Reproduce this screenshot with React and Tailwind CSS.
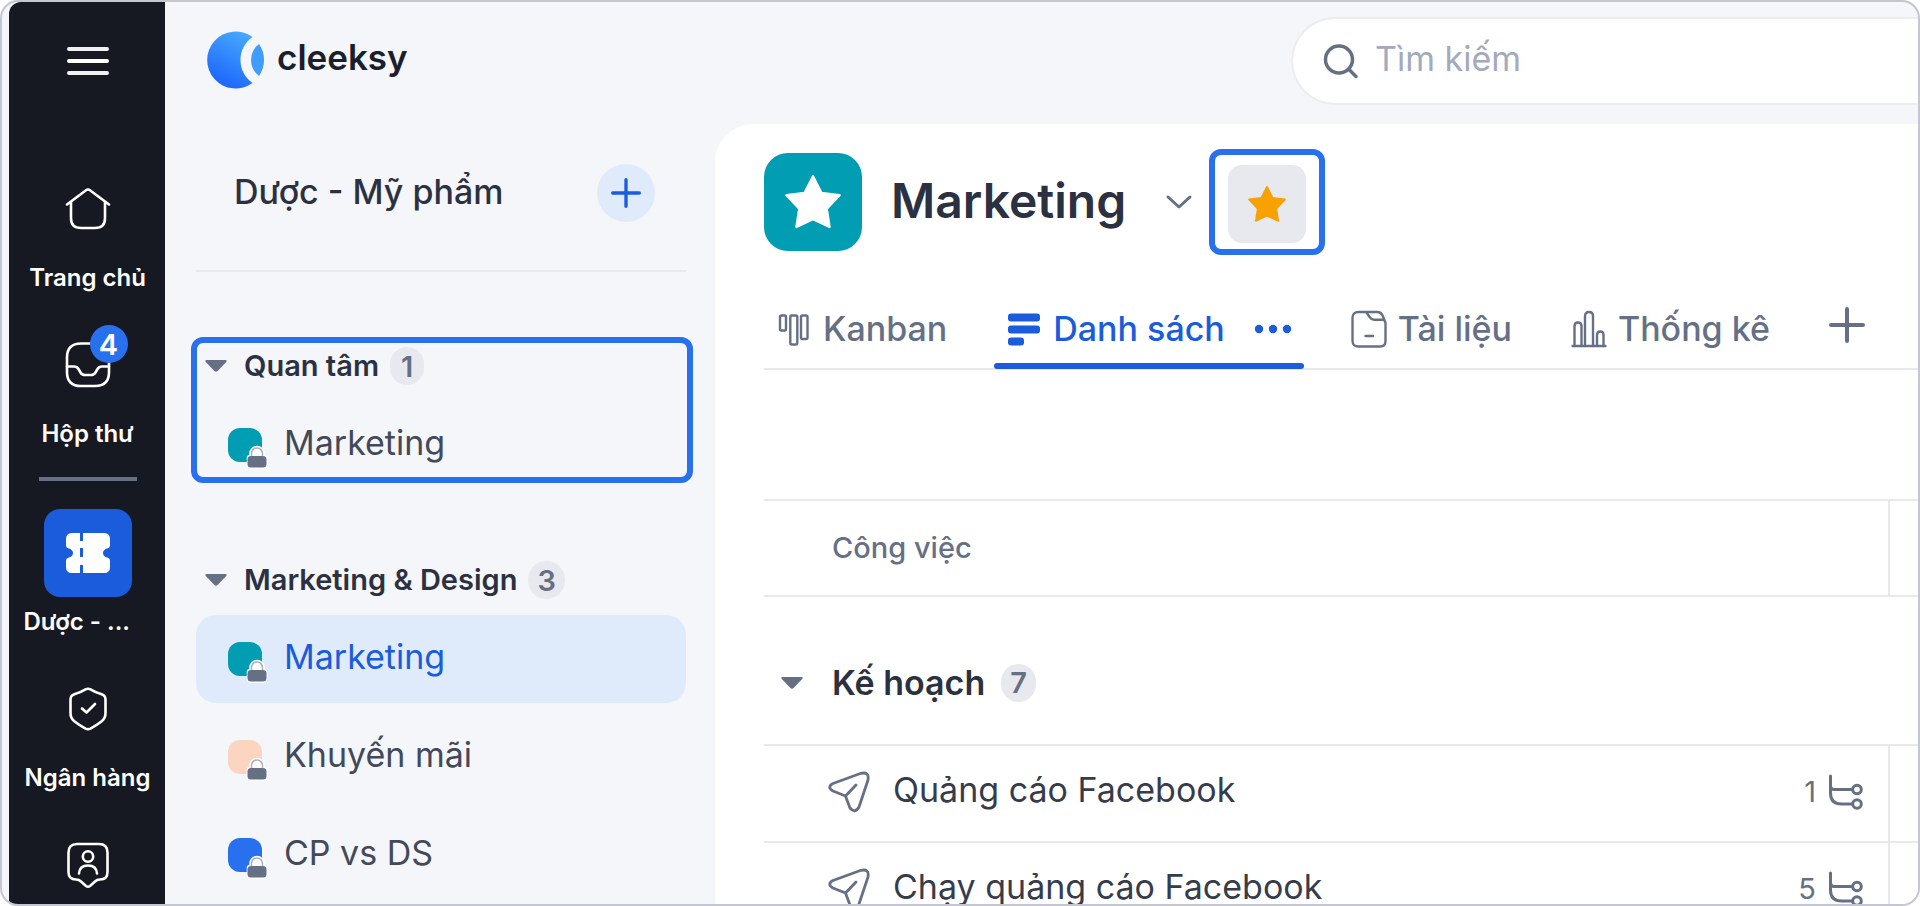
import { useState } from "react";

const NAV_TOP = [
  { id: "home", label: "Trang chủ", icon: HomeIcon },
  { id: "inbox", label: "Hộp thư", icon: InboxIcon, badge: 4 },
];

const NAV_SPACES = [
  { id: "pharma", label: "Dược - ...", icon: TicketIcon, clipped: true },
  { id: "bank", label: "Ngân hàng", icon: ShieldIcon },
  { id: "contacts", icon: UserCardIcon },
];

const TEAM_BOARDS = [
  { id: "marketing", name: "Marketing", color: "bg-[#009db3]" },
  { id: "promo", name: "Khuyến mãi", color: "bg-[#fbd5c0]" },
  { id: "cpds", name: "CP vs DS", color: "bg-[#2970ef]" },
];

const TASKS = [
  { id: 1, title: "Quảng cáo Facebook", subtasks: 1 },
  { id: 2, title: "Chạy quảng cáo Facebook", subtasks: 5 },
];

function HomeIcon() {
  return (
    <svg width="48" height="48" viewBox="0 0 48 48" fill="none" stroke="currentColor" strokeWidth="2.6" strokeLinecap="round" strokeLinejoin="round">
      <path d="M3 19.5 L22 5.2 Q24 3.8 26 5.2 L45 19.5" />
      <path d="M7 17 V33 Q7 43 17 43 H31 Q41 43 41 33 V17" />
    </svg>
  );
}

function InboxIcon() {
  return (
    <svg width="48" height="48" viewBox="0 0 48 48" fill="none" stroke="currentColor" strokeWidth="2.6" strokeLinecap="round" strokeLinejoin="round">
      <path d="M17 2.5 H31 Q45 2.5 45 16.5 V31 Q45 45 31 45 H17 Q3 45 3 31 V16.5 Q3 2.5 17 2.5 Z" />
      <path d="M3 25.5 H10 Q13 25.5 14.5 28 L16.5 31.5 Q18 34 21 34 H27 Q30 34 31.5 31.5 L33.5 28 Q35 25.5 38 25.5 H45" />
    </svg>
  );
}

function TicketIcon() {
  return (
    <svg width="44" height="40" viewBox="0 0 44 40" fill="currentColor">
      <path
        fillRule="evenodd"
        d="M6 0 H14 V8 H17 V0 H38 Q44 0 44 6 V12 Q44 15 41 15.5 Q37 17 37 20 Q37 23 41 24.5 Q44 25 44 28 V34 Q44 40 38 40 H17 V32 H14 V40 H6 Q0 40 0 34 V28 Q0 25 3 24.5 Q7 23 7 20 Q7 17 3 15.5 Q0 15 0 12 V6 Q0 0 6 0 Z M14 15 V24 H17 V15 Z"
      />
    </svg>
  );
}

function ShieldIcon() {
  return (
    <svg width="40" height="44" viewBox="0 0 40 44" fill="none" stroke="currentColor" strokeWidth="2.6" strokeLinecap="round" strokeLinejoin="round">
      <path d="M17.5 2.4 Q20 1.2 22.5 2.4 Q28 5.8 33 7 Q37.5 8.4 37.5 12.5 V26 Q37.5 31 34 34 Q29 38 22.5 41.6 Q20 42.8 17.5 41.6 Q11 38 6 34 Q2.5 31 2.5 26 V12.5 Q2.5 8.4 7 7 Q12 5.8 17.5 2.4 Z" />
      <path d="M14 21.5 L18.5 25.5 L27 17" />
    </svg>
  );
}

function UserCardIcon() {
  return (
    <svg width="44" height="48" viewBox="0 0 44 48" fill="none" stroke="currentColor" strokeWidth="2.6" strokeLinecap="round" strokeLinejoin="round">
      <path d="M11 3 H33 Q41.5 3 41.5 11.5 V31 Q41.5 38.5 34 38.5 Q31 38.5 29 40.5 L24 45 Q22 46.5 20 45 L15 40.5 Q13 38.5 10 38.5 Q2.5 38.5 2.5 31 V11.5 Q2.5 3 11 3 Z" />
      <circle cx="22" cy="15.5" r="5.2" />
      <path d="M13 32.5 Q13.5 24.5 22 24.5 Q30.5 24.5 31 32.5" />
    </svg>
  );
}

function LogoMark() {
  return (
    <svg width="58" height="58" viewBox="0 0 58 58">
      <defs>
        <linearGradient id="logo-fill" x1="14" y1="56" x2="42" y2="4" gradientUnits="userSpaceOnUse">
          <stop offset="0" stopColor="#1c64fb" />
          <stop offset="1" stopColor="#46a9fe" />
        </linearGradient>
      </defs>
      <path fill="url(#logo-fill)" d="M45.5 6 A28.5 28.5 0 1 0 45.5 52 A28 28 0 0 1 45.5 6 Z" />
      <path fill="#409dfd" d="M52 13 A28 28 0 0 1 52 45 A20 20 0 0 1 52 13 Z" />
    </svg>
  );
}

function StarIcon({ size }) {
  return (
    <svg width={size} height={size} viewBox="0 0 24 24" fill="currentColor" stroke="currentColor" strokeWidth="1" strokeLinejoin="round">
      <path d="M12 1 L15.6 8.1 L23.4 9.1 L17.9 14.9 L19.1 22.7 L12 19.4 L4.9 22.7 L6.1 14.9 L0.6 9.1 L8.4 8.1 Z" />
    </svg>
  );
}

function PlusIcon({ size, stroke }) {
  return (
    <svg width={size} height={size} viewBox="0 0 36 36" fill="none" stroke="currentColor" strokeWidth={stroke} strokeLinecap="round">
      <path d="M18 2 V34 M2 18 H34" />
    </svg>
  );
}

function Caret() {
  return (
    <svg className="shrink-0 text-[#667085]" width="24" height="14" viewBox="0 0 24 14" fill="currentColor">
      <path d="M2.5 1 H21.5 Q23.5 1.2 22.2 2.9 L13.6 12 Q12 13.5 10.4 12 L1.8 2.9 Q0.5 1.2 2.5 1 Z" />
    </svg>
  );
}

function LockIcon() {
  return (
    <svg width="24" height="26" viewBox="0 0 24 26">
      <path d="M2.5 13 Q3 11.5 5 11 V9.5 A7 7 0 0 1 19 9.5 V11 Q21 11.5 21.5 13 V21 Q21.5 24 18 24 H6 Q2.5 24 2.5 21 Z" fill="#fff" stroke="#fff" strokeWidth="1.5" />
      <path d="M6.5 12 V9.5 A5.5 5.5 0 0 1 17.5 9.5 V12" fill="none" stroke="#a9afbd" strokeWidth="1.5" />
      <rect x="2.5" y="12" width="19" height="11.5" rx="3.5" fill="#667085" />
    </svg>
  );
}

function KanbanIcon() {
  return (
    <svg width="36" height="36" viewBox="0 0 36 36" fill="none" stroke="currentColor" strokeWidth="2.4">
      <rect x="4" y="4.5" width="6" height="15" rx="1.5" />
      <rect x="14.3" y="4.5" width="7" height="29" rx="1.5" />
      <rect x="25" y="4.5" width="6.5" height="23.5" rx="1.5" />
    </svg>
  );
}

function ListIcon() {
  return (
    <svg width="36" height="36" viewBox="0 0 36 36" fill="currentColor">
      <rect x="2" y="2.5" width="32" height="8" rx="3" />
      <rect x="2" y="14.5" width="32" height="8" rx="3" />
      <rect x="2" y="26.5" width="16" height="8" rx="3" />
    </svg>
  );
}

function DocIcon() {
  return (
    <svg width="36" height="38" viewBox="0 0 36 38" fill="none" stroke="currentColor" strokeWidth="2.4" strokeLinecap="round" strokeLinejoin="round">
      <path d="M7.5 2 H26 Q30.5 2 32 6.5 L34.5 13 V31 Q34.5 36.5 29 36.5 H7.5 Q1.5 36.5 1.5 30.5 V8 Q1.5 2 7.5 2 Z" />
      <path d="M15.5 2.5 L19 7.5 Q20.5 9.7 23 9.7 H33" />
      <path d="M14.5 26 H22" />
    </svg>
  );
}

function ChartIcon() {
  return (
    <svg width="36" height="38" viewBox="0 0 36 38" fill="none" stroke="currentColor" strokeWidth="2.4" strokeLinecap="round">
      <path d="M1.5 36 H34.5" />
      <path d="M3.5 36 V16 Q3.5 12.5 7 12.5 Q10.5 12.5 10.5 16 V36" />
      <path d="M14 36 V6 Q14 2 18 2 Q22 2 22 6 V36" />
      <path d="M26 36 V25 Q26 21.5 29.3 21.5 Q32.5 21.5 32.5 25 V36" />
    </svg>
  );
}

function SendIcon() {
  return (
    <svg className="shrink-0" width="42" height="42" viewBox="0 0 42 42" fill="none" stroke="#667085" strokeWidth="2.8" strokeLinecap="round" strokeLinejoin="round">
      <path d="M5 12.5 L33 2.3 Q41.5 0.5 40 9 L31 36 Q27 43 22 37 L17.5 25 L5 20 Q-1.5 16 5 12.5 Z" />
      <path d="M17.5 25 L28 14" />
    </svg>
  );
}

function SubtaskIcon() {
  return (
    <svg width="36" height="36" viewBox="0 0 36 36" fill="none" stroke="currentColor" strokeWidth="3" strokeLinecap="round">
      <path d="M2.5 2 V19 Q2.5 30 13.5 30 H24.5" />
      <path d="M2.5 12 Q3 15.5 6 15.5 H24.5" />
      <circle cx="29" cy="15.5" r="4.3" />
      <circle cx="29" cy="30" r="4.3" />
    </svg>
  );
}

function NavItem({ item, active }) {
  const Icon = item.icon;
  return (
    <button type="button" aria-label={item.label || item.id} className="flex shrink-0 flex-col items-center gap-2.5 text-white">
      <span className={`relative flex h-[88px] w-[88px] items-center justify-center rounded-2xl ${active ? "bg-[#1a5cdb]" : ""}`}>
        <Icon />
        {item.badge && (
          <span className="absolute top-1 right-1 flex h-[38px] w-[38px] items-center justify-center rounded-full bg-[#2970ef] text-[29px] leading-none font-semibold">
            {item.badge}
          </span>
        )}
      </span>
      {item.label && (
        <span className={`w-[132px] text-2xl leading-[30px] font-semibold whitespace-nowrap ${item.clipped ? "pl-0.5 text-left" : "text-center"}`}>
          {item.label}
        </span>
      )}
    </button>
  );
}

function CountBadge({ children }) {
  return (
    <span className="flex h-[38px] min-w-[34px] items-center justify-center rounded-full bg-[#e8e9ee] px-[9px] text-[29px] leading-none font-semibold text-[#667085]">
      {children}
    </span>
  );
}

function SectionHeader({ title, count }) {
  return (
    <h2 className="flex h-[50px] items-center pl-2 text-[29px] leading-9 font-semibold text-[#2c3142]">
      <Caret />
      <span className="mr-[11px] ml-4">{title}</span>
      <CountBadge>{count}</CountBadge>
    </h2>
  );
}

function BoardLink({ board, active }) {
  return (
    <a
      href={`#${board.id}`}
      className={`flex h-[88px] items-center gap-[22px] rounded-[20px] pl-8 text-[34px] leading-10 ${
        active ? "bg-[#dfebfb] text-[#1a5cdb]" : "text-[#434959]"
      }`}
    >
      <span className={`relative h-[34px] w-[34px] rounded-[12px] ${board.color}`}>
        <span className="absolute -right-[7px] -bottom-2">
          <LockIcon />
        </span>
      </span>
      <span className="pb-1">{board.name}</span>
    </a>
  );
}

function Tab({ icon, label, active, onClick }) {
  return (
    <button
      type="button"
      onClick={onClick}
      className={`relative flex h-full items-center gap-[11px] px-3 text-[34px] leading-10 font-medium ${
        active ? "text-[#1a5cdb]" : "text-[#667085]"
      }`}
    >
      {icon}
      <span>{label}</span>
      {active && (
        <>
          <svg className="ml-[18px]" width="38" height="10" viewBox="0 0 38 10" fill="currentColor">
            <circle cx="5" cy="5" r="4.2" />
            <circle cx="19" cy="5" r="4.2" />
            <circle cx="33" cy="5" r="4.2" />
          </svg>
          <span className="absolute inset-x-0 -bottom-px h-1.5 rounded-full bg-[#1a5cdb]" />
        </>
      )}
    </button>
  );
}

export default function App() {
  const [tab, setTab] = useState("list");
  const [query, setQuery] = useState("");

  return (
    <div className="flex h-screen overflow-hidden rounded-[18px] border-2 border-[#c4c6d1] bg-[#f4f6fa] pl-[7px] font-['Inter',sans-serif]">
      <nav className="flex w-[156px] shrink-0 flex-col items-center gap-7 rounded-tl-[12px] bg-[#161922] pl-px">
        <button type="button" aria-label="Menu" className="mt-[38px] mb-[55px] flex h-[42px] w-[42px] shrink-0 flex-col items-center justify-center gap-2 text-white">
          <span className="h-1 w-full rounded-full bg-[#f0f0f2]" />
          <span className="h-1 w-full rounded-full bg-white" />
          <span className="h-1 w-full rounded-full bg-[#f0f0f2]" />
        </button>
        {NAV_TOP.map((item) => (
          <NavItem key={item.id} item={item} />
        ))}
        <hr className="h-1 w-[98px] shrink-0 border-0 bg-[#667085]" />
        {NAV_SPACES.map((item) => (
          <NavItem key={item.id} item={item} active={item.id === "pharma"} />
        ))}
      </nav>

      <div className="flex min-w-0 flex-1 flex-col">
        <header className="flex h-[122px] shrink-0 items-start">
          <div className="flex w-[1126px] shrink-0 items-center gap-3 pt-[29px] pl-[42px]">
            <LogoMark />
            <span className="pb-1.5 text-[35px] leading-10 font-semibold text-[#1b1e2c]">cleeksy</span>
          </div>
          <label className="mt-[15px] flex h-[88px] min-w-0 flex-1 items-center gap-4 rounded-l-full border-2 border-r-0 border-[#ececf1] bg-white pl-[30px]">
            <svg className="shrink-0" width="36" height="36" viewBox="0 0 36 36" fill="none" stroke="#667085" strokeWidth="3.5" strokeLinecap="round">
              <circle cx="16" cy="16.5" r="13.5" />
              <path d="M26 26.5 L33 33.5" />
            </svg>
            <input
              type="text"
              aria-label="Tìm kiếm"
              placeholder="Tìm kiếm"
              value={query}
              onChange={(e) => setQuery(e.target.value)}
              className="min-w-0 flex-1 pb-1 text-[34px] leading-10 outline-none placeholder:text-[#a3aabd]"
            />
          </label>
        </header>

        <div className="flex min-h-0 flex-1">
          <aside className="w-[550px] shrink-0 pt-10 pr-[29px] pl-[31px]">
            <div className="flex items-center justify-between border-b-2 border-[#e8e9ee] pr-[31px] pb-12 pl-[38px]">
              <h1 className="pb-0.5 text-[34px] leading-10 font-medium text-[#2c3142]">Dược - Mỹ phẩm</h1>
              <button type="button" aria-label="Thêm" className="flex h-[58px] w-[58px] items-center justify-center rounded-full bg-[#dfebfb] text-[#1a5cdb]">
                <PlusIcon size={30} stroke={4} />
              </button>
            </div>

            <section className="relative mt-[69px] flex flex-col gap-2.5">
              <SectionHeader title="Quan tâm" count={1} />
              <BoardLink board={TEAM_BOARDS[0]} />
              <div className="pointer-events-none absolute -top-1 -right-[7px] bottom-1.5 -left-[5px] rounded-[12px] border-6 border-[#2970ef]" />
            </section>

            <section className="mt-[66px] flex flex-col gap-2.5">
              <SectionHeader title="Marketing & Design" count={3} />
              {TEAM_BOARDS.map((board) => (
                <BoardLink key={board.id} board={board} active={board.id === "marketing"} />
              ))}
            </section>
          </aside>

          <main className="min-w-0 flex-1 rounded-tl-[38px] bg-white pt-[25px] pl-[49px]">
            <div className="flex items-center">
              <div className="flex h-[98px] w-[98px] items-center justify-center rounded-[24px] bg-[#009db3] text-white">
                <StarIcon size={56} />
              </div>
              <h2 className="ml-[29px] pb-0.5 text-5xl leading-[56px] font-semibold text-[#2c3142]">Marketing</h2>
              <button type="button" aria-label="Tùy chọn" className="ml-[39px] text-[#667085]">
                <svg width="28" height="16" viewBox="0 0 28 16" fill="none" stroke="currentColor" strokeWidth="3" strokeLinecap="round" strokeLinejoin="round">
                  <path d="M3 3 L14 13 L25 3" />
                </svg>
              </button>
              <div className="ml-4 rounded-[12px] border-6 border-[#2970ef] px-[13px] pt-2.5 pb-1.5">
                <button type="button" aria-label="Quan tâm" aria-pressed="true" className="flex h-[78px] w-[78px] items-center justify-center rounded-[14px] bg-[#e8e9ee] text-[#f7a102]">
                  <StarIcon size={38} />
                </button>
              </div>
            </div>

            <div className="mt-[34px] flex h-[81px] items-center gap-[35px] border-b-2 border-[#e8e9ef]">
              <Tab icon={<KanbanIcon />} label="Kanban" active={tab === "kanban"} onClick={() => setTab("kanban")} />
              <Tab icon={<ListIcon />} label="Danh sách" active={tab === "list"} onClick={() => setTab("list")} />
              <Tab icon={<DocIcon />} label="Tài liệu" active={tab === "docs"} onClick={() => setTab("docs")} />
              <Tab icon={<ChartIcon />} label="Thống kê" active={tab === "stats"} onClick={() => setTab("stats")} />
              <button type="button" aria-label="Thêm tab" className="ml-3 pb-2 text-[#667085]">
                <PlusIcon size={36} stroke={4} />
              </button>
            </div>

            <table className="mt-[129px] w-full border-collapse text-[#667085]">
              <thead>
                <tr className="h-24 border-y-2 border-[#e8e9ef]">
                  <th className="border-r-2 border-[#e8e9ef] pl-[68px] text-left text-[29px] leading-9 font-medium">Công việc</th>
                  <th className="w-[29px]" />
                </tr>
              </thead>
              <tbody>
                <tr className="h-[149px] border-b-2 border-[#e8e9ef]">
                  <td colSpan={2} className="pt-6 pl-4">
                    <div className="flex items-center">
                      <Caret />
                      <span className="mr-4 ml-7 text-[34px] leading-10 font-semibold text-[#2c3142]">Kế hoạch</span>
                      <CountBadge>7</CountBadge>
                    </div>
                  </td>
                </tr>
                {TASKS.map((task) => (
                  <tr key={task.id} className="h-[97px] border-b-2 border-[#e8e9ef]">
                    <td className="border-r-2 border-[#e8e9ef] pr-6 pb-1 pl-16">
                      <div className="flex items-center">
                        <SendIcon />
                        <span className="ml-[23px] pb-1 text-[34px] leading-10 text-[#363c4c]">{task.title}</span>
                        <span className="ml-auto flex items-center gap-3 text-[29px] leading-9">
                          {task.subtasks}
                          <SubtaskIcon />
                        </span>
                      </div>
                    </td>
                    <td />
                  </tr>
                ))}
              </tbody>
            </table>
          </main>
        </div>
      </div>
    </div>
  );
}
